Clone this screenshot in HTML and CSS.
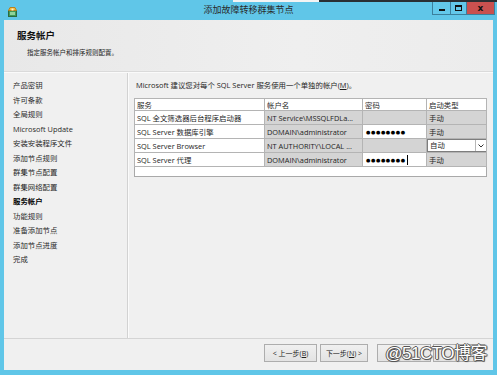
FILE: index.html
```html
<!DOCTYPE html>
<html lang="zh-CN">
<head>
<meta charset="utf-8">
<title>添加故障转移群集节点</title>
<link rel="stylesheet" href="styles.css">
</head>
<body>
<div class="window">
  <div class="topedge"><span class="e1"></span><span class="e2"></span><span class="e3"></span></div>
  <div class="titlebar">
    <div class="tb-left">
      <svg class="appicon" width="9" height="10" viewBox="0 0 9 10">
        <rect x="0.5" y="3.5" width="8" height="6" fill="#3e9a5a" stroke="#2c6b3f"/>
        <rect x="2" y="5" width="5" height="3" fill="#8fd39b"/>
        <path d="M0.5 3.5 L2 0.5 L7 0.5 L8.5 3.5 Z" fill="#f1b93b" stroke="#b7821c"/>
        <rect x="3.5" y="1.5" width="2" height="2" fill="#fff3c8"/>
      </svg>
    </div>
    <div class="title">添加故障转移群集节点</div>
    <div class="controls">
      <span class="ctl min"><i></i></span>
      <span class="ctl max"><i></i></span>
      <span class="ctl close">x</span>
    </div>
  </div>
  <div class="client">
    <div class="header">
      <div class="h1">服务帐户</div>
      <div class="sub">指定服务帐户和排序规则配置。</div>
    </div>
    <div class="main">
      <ul class="nav">
        <li>产品密钥</li>
        <li>许可条款</li>
        <li>全局规则</li>
        <li>Microsoft Update</li>
        <li>安装安装程序文件</li>
        <li>添加节点规则</li>
        <li>群集节点配置</li>
        <li>群集网络配置</li>
        <li class="current">服务帐户</li>
        <li>功能规则</li>
        <li>准备添加节点</li>
        <li>添加节点进度</li>
        <li>完成</li>
      </ul>
      <div class="content">
        <p class="intro">Microsoft 建议您对每个 SQL Server 服务使用一个单独的帐户(<u>M</u>)。</p>
        <table class="grid">
          <colgroup><col class="c1"><col class="c2"><col class="c3"><col class="c4"></colgroup>
          <thead>
            <tr><th>服务</th><th>帐户名</th><th>密码</th><th>启动类型</th></tr>
          </thead>
          <tbody>
            <tr><td>SQL 全文筛选器后台程序启动器</td><td class="ro">NT Service\MSSQLFDLa...</td><td class="ro"></td><td class="ro">手动</td></tr>
            <tr><td>SQL Server 数据库引擎</td><td class="ro">DOMAIN\administrator</td><td class="pw">●●●●●●●●</td><td class="ro">手动</td></tr>
            <tr><td>SQL Server Browser</td><td class="ro">NT AUTHORITY\LOCAL ...</td><td class="ro"></td><td class="dd"><div class="combo"><span class="val">自动</span><span class="arrow"><svg width="6" height="4" viewBox="0 0 6 4"><path d="M0.5 0.5 L3 3 L5.5 0.5" fill="none" stroke="#333" stroke-width="1"/></svg></span></div></td></tr>
            <tr><td>SQL Server 代理</td><td class="ro">DOMAIN\administrator</td><td class="pw">●●●●●●●●<span class="caret"></span></td><td class="ro">手动</td></tr>
            <tr class="empty"><td colspan="4"></td></tr>
          </tbody>
        </table>
      </div>
    </div>
    <div class="footer">
      <span class="btn b1">&lt; 上一步(<u>B</u>)</span>
      <span class="btn b2">下一步(<u>N</u>) &gt;</span>
      <span class="btn b3"></span>
      <span class="btn b4"></span>
      <span class="watermark">@51CTO博客</span>
    </div>
  </div>
</div>
</body>
</html>
```
FILE: styles.css
```css
* { box-sizing: border-box; }
html, body { margin: 0; padding: 0; }
body {
  width: 497px;
  height: 375px;
  overflow: hidden;
  font-family: "Open Sans", "Noto Sans CJK SC", sans-serif;
  font-size: 7.4px;
  color: #1e1e1e;
  background: #5fc5e7;
}
.window {
  width: 497px;
  height: 375px;
  display: flex;
  flex-direction: column;
  background: #60c6e8;
}
.topedge { height: 2px; display: flex; }
.topedge .e1 { width: 233px; background: #60c6e8; }
.topedge .e2 { width: 86px; background: #f4f4f4; }
.topedge .e3 { flex: 1; background: #2a2f33; }

.titlebar {
  height: 18px;
  display: grid;
  grid-template-columns: 1fr auto 1fr;
  align-items: start;
}
.tb-left { padding: 5px 0 0 8px; }
.appicon { display: block; }
.title {
  font-size: 9px;
  line-height: 16px;
  color: #2a2a2a;
  font-family: "Noto Sans CJK SC", sans-serif;
}
.controls {
  justify-self: end;
  display: flex;
  margin-right: 2px;
}
.ctl {
  height: 13px;
  display: flex;
  align-items: center;
  justify-content: center;
  border: 1px solid #3b7f9c;
  border-top: none;
}
.ctl.min { width: 19px; background: #63c8ea; }
.ctl.max { width: 16px; background: #63c8ea; border-left: none; }
.ctl.close {
  width: 28px;
  background: #c9514f;
  border-left: none;
  color: #111;
  font-family: "DejaVu Sans", sans-serif;
  font-weight: bold;
  font-size: 9px;
  line-height: 11px;
}
.ctl.min i { width: 6px; height: 2px; background: #111; margin-top: 4px; }
.ctl.max i { width: 7px; height: 6px; border: 1px solid #111; border-top-width: 2px; }

.client {
  flex: 1;
  margin: 0 4px 5px 4px;
  display: flex;
  flex-direction: column;
  background: #f0f0f0;
}
.header {
  height: 52px;
  padding: 9px 0 0 13px;
  background: linear-gradient(to right, #e8e8e8, #efefef 60%, #ececec);
  border-bottom: 1px solid #dadada;
}
.h1 {
  font-family: "Noto Sans CJK SC", sans-serif;
  font-weight: bold;
  font-size: 9.5px;
  line-height: 12px;
  color: #111;
}
.sub {
  margin: 7px 0 0 10px;
  font-size: 6.5px;
  line-height: 10px;
  color: #222;
}
.main {
  height: 266px;
  display: flex;
  border-top: 1px solid #fafafa;
}
.nav {
  list-style: none;
  margin: 0;
  width: 125px;
  padding: 5px 0 0 9px;
  border-right: 1px solid #d2d2d2;
  box-shadow: 1px 0 0 #fbfbfb;
}
.nav li {
  line-height: 14.5px;
  height: 14.5px;
  color: #2a2a2a;
  white-space: nowrap;
}
.nav li.current { font-weight: bold; color: #000; }

.content {
  flex: 1;
  padding: 0 6px 0 6px;
}
.intro {
  margin: 6px 0 7px 2px;
  line-height: 12px;
  white-space: nowrap;
}
.grid {
  width: 352px;
  border-collapse: collapse;
  table-layout: fixed;
  background: #fff;
  border: 1px solid #a9a9a9;
}
.grid col.c1 { width: 130px; }
.grid col.c2 { width: 98px; }
.grid col.c3 { width: 64px; }
.grid col.c4 { width: 60px; }
.grid th, .grid td {
  border: 1px solid #b4b4b4;
  padding: 0 0 0 2px;
  text-align: left;
  font-weight: normal;
  white-space: nowrap;
  overflow: hidden;
  color: #1e1e1e;
}
.grid th { height: 12px; line-height: 10px; }
.grid td { height: 14px; line-height: 12px; }
.grid td.ro { background: #d4d4d4; }
.grid td.pw {
  font-family: "DejaVu Sans", sans-serif;
  font-size: 5px;
  letter-spacing: 0.6px;
  color: #000;
  padding-left: 3px;
}
.caret {
  display: inline-block;
  width: 1px;
  height: 10px;
  background: #000;
  vertical-align: middle;
  margin-left: 1px;
}
.grid td.dd { padding: 0; background: #d4d4d4; }
.combo {
  display: flex;
  height: 13px;
  background: #fff;
  border: 1px solid #7d7d7d;
  margin-right: -1px;
}
.combo .val { flex: 1; padding-left: 2px; line-height: 11px; }
.combo .arrow {
  width: 11px;
  border-left: 1px solid #b8b8b8;
  display: flex;
  align-items: center;
  justify-content: center;
}
.grid tr.empty td { height: 10px; border-left: none; border-right: none; border-bottom: none; background: #fff; }

.footer {
  height: 32px;
  position: relative;
  border-top: 1px solid #d4d4d4;
  display: flex;
  align-items: flex-start;
  justify-content: flex-end;
  padding: 5px 8px 0 0;
}
.btn {
  height: 18px;
  display: flex;
  align-items: center;
  justify-content: center;
  border: 1px solid #adadad;
  background: linear-gradient(#f0f0f0, #e3e3e3);
  font-size: 7px;
  color: #222;
}
.b1 { width: 53px; }
.b2 { width: 48px; margin-left: 3px; }
.b3 { width: 54px; margin-left: 9px; }
.b4 { width: 52px; margin-left: 2px; }
.watermark {
  position: absolute;
  right: 6px;
  top: 4px;
  font-family: "Liberation Sans", "Noto Sans CJK SC", sans-serif;
  font-size: 17px;
  line-height: 22px;
  color: #fff;
  letter-spacing: -0.5px;
  text-shadow: 1px 0 0 #555, -1px 0 0 #555, 0 1px 0 #555, 0 -1px 0 #555, 1px 1px 1px #666;
}
```
